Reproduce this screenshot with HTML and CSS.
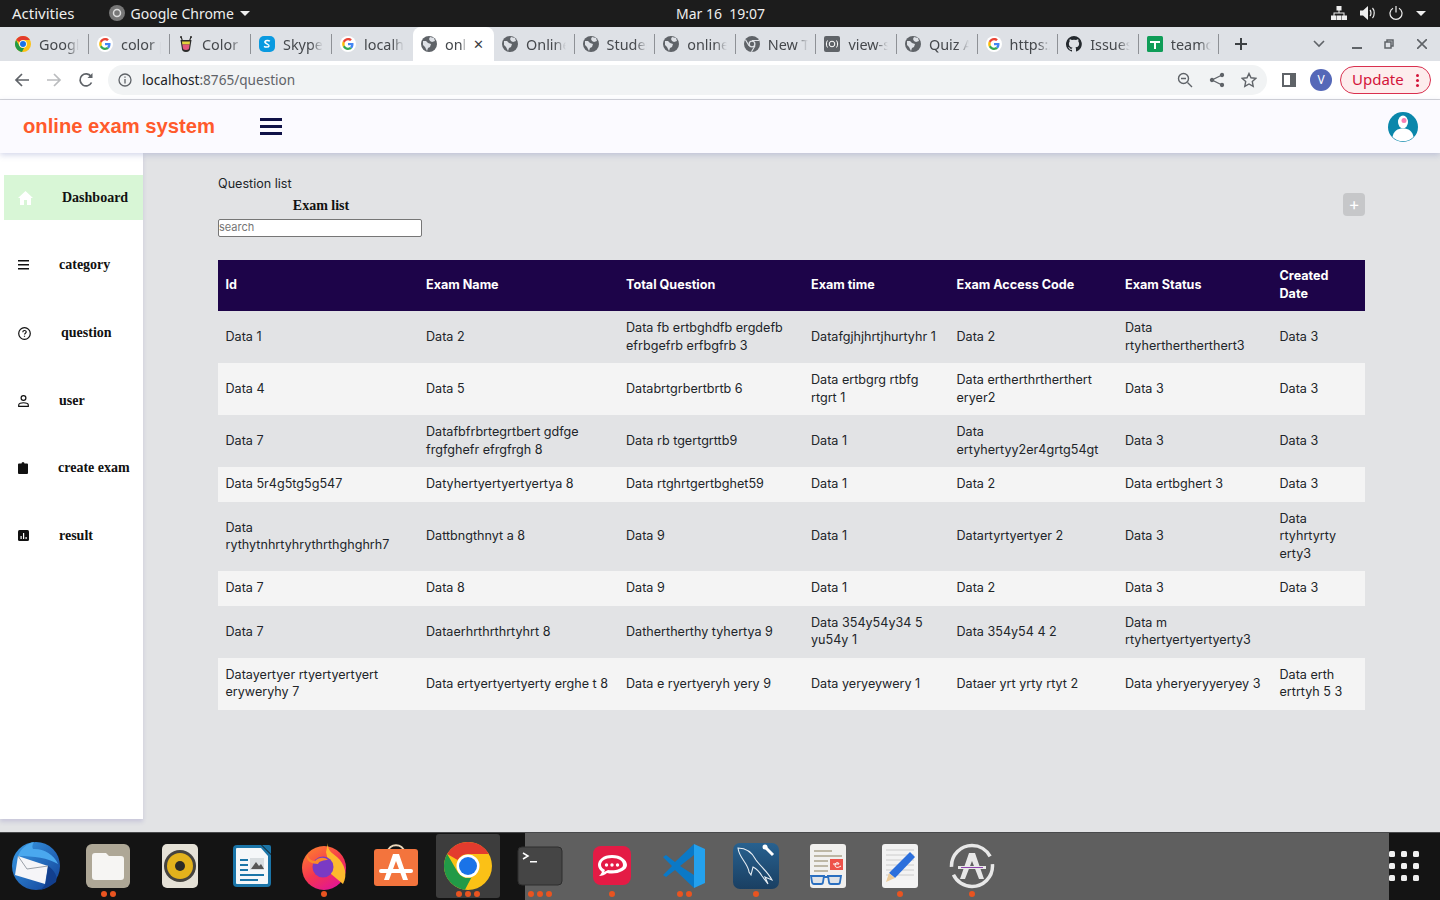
FILE: index.html
```html
<!DOCTYPE html>
<html lang="en">
<head>
    <meta charset="UTF-8">
    <title>online exam system</title>
    <link rel="stylesheet" href="styles.css">
</head>
<body>
    <svg class="defs" width="0" height="0">
        <defs>
            <linearGradient id="fox" x1="0" y1="0" x2="0.6" y2="1">
                <stop offset="0" stop-color="#ff8a2a"/>
                <stop offset="0.6" stop-color="#f5364f"/>
                <stop offset="1" stop-color="#e3188f"/>
            </linearGradient>
            <linearGradient id="bird" x1="0" y1="0" x2="1" y2="1">
                <stop offset="0" stop-color="#3a9ce6"/>
                <stop offset="1" stop-color="#113f96"/>
            </linearGradient>
            <linearGradient id="sql" x1="0" y1="0" x2="0" y2="1">
                <stop offset="0" stop-color="#28618f"/>
                <stop offset="1" stop-color="#1a3f62"/>
            </linearGradient>
        </defs>
        <symbol id="globe" viewBox="0 0 16 16">
            <circle cx="8" cy="8" r="8" fill="#5f6368"/>
            <path d="M2 5l3 0 2 2 3 1-1 3-2 1-1 3-2-4-2-2zM9 1l4 1 1 3-3 1-2-1-1-2z" fill="#dee1e6"/>
        </symbol>
        <symbol id="gicon" viewBox="0 0 16 16">
            <circle cx="8" cy="8" r="8" fill="#fff"/>
            <g transform="translate(8 8) scale(1.2) translate(-8 -8)">
                <path d="M12.600 8.200c0-.4 0-.7-.1-1H8v1.900h2.600c-.1.600-.5 1.100-1 1.500l1.600 1.200c.9-.9 1.400-2.100 1.400-3.600z" fill="#4285f4"/>
                <path d="M8 13c1.300 0 2.400-.4 3.200-1.200l-1.600-1.200c-.4.300-1 .5-1.600.5-1.300 0-2.300-.8-2.700-2L3.700 10.300C4.500 11.900 6.100 13 8 13z" fill="#34a853"/>
                <path d="M5.300 9.100c-.2-.7-.2-1.400 0-2.100L3.700 5.700c-.7 1.400-.7 3.200 0 4.600z" fill="#fbbc05"/>
                <path d="M8 4.900c.7 0 1.300.2 1.800.7l1.400-1.400C10.400 3.400 9.300 3 8 3 6.100 3 4.500 4.100 3.700 5.700L5.300 7c.4-1.200 1.400-2.100 2.700-2.100z" fill="#ea4335"/>
            </g>
        </symbol>
        <symbol id="chrome" viewBox="0 0 48 48">
            <circle cx="24" cy="24" r="24" fill="#fbc116"/>
            <path d="M24 0a24 24 0 0 1 20.800 12H24a12 12 0 0 0-10.400 6L3.200 12A24 24 0 0 1 24 0z" fill="#e33b2e"/>
            <path d="M3.200 12l10.400 18a12 12 0 0 0 13.800 5.500L21 47.800A24 24 0 0 1 3.200 12z" fill="#229a47"/>
            <circle cx="24" cy="24" r="11.500" fill="#fff"/>
            <circle cx="24" cy="24" r="9" fill="#1a73e8"/>
        </symbol>
    </svg>

    <div class="topbar">
        <span class="activities">Activities</span>
        <span class="app-menu">
            <svg class="chrome-mono" width="16" height="16" viewBox="0 0 16 16"><circle cx="8" cy="8" r="8" fill="#777"/><circle cx="8" cy="8" r="3.500" fill="none" stroke="#ddd" stroke-width="1.500"/></svg>
            Google Chrome
            <i class="caret"></i>
        </span>
        <span class="clock">Mar 16&nbsp; 19:07</span>
        <span class="tray">
            <svg width="16" height="14" viewBox="0 0 16 14" fill="#eee"><path d="M5.500 0h5v4.500h-5zM0 9.500h5V14H0zM5.500 9.500h5V14h-5zM11 9.500h5V14h-5zM7.500 4.500h1v2h5v3h-1v-2h-9v2h-1v-3h5z"/></svg>
            <svg width="16" height="14" viewBox="0 0 16 14" fill="#eee"><path d="M0 4.500h3L8 0v14l-5-4.500H0z"/><path d="M10 4c1.300 1.500 1.300 4.500 0 6M12.500 2c2.300 2.500 2.300 7.500 0 10" fill="none" stroke="#eee" stroke-width="1.200"/></svg>
            <svg width="14" height="14" viewBox="0 0 14 14" fill="none" stroke="#eee" stroke-width="1.200"><path d="M4 2.200a6 6 0 1 0 6 0M7 0v6.500"/></svg>
            <i class="caret"></i>
        </span>
    </div>

    <div class="tabstrip">
        <div class="tab"><svg class="fav" viewBox="0 0 48 48"><use href="#chrome"/></svg><span class="tab-title">Google</span></div>
        <div class="tab"><svg class="fav"><use href="#gicon"/></svg><span class="tab-title">color picker</span></div>
        <div class="tab"><svg class="fav" viewBox="0 0 16 16"><path d="M2.500 4h11l-1.300 8a4.200 4 0 0 1-8.400 0z" fill="#2b2b2b"/><path d="M4 5.500h8l-.3 3H4.300z" fill="#e3d23c"/><path d="M4.400 8.500h7.200l-.4 3a3.200 2.500 0 0 1-6.400 0z" fill="#e2587c"/><path d="M3 1l1.200 3M13 1l-1.200 3" stroke="#2b2b2b" stroke-width="1.200"/><circle cx="3" cy="1" r="1" fill="#2b2b2b"/><circle cx="13" cy="1" r="1" fill="#2b2b2b"/></svg><span class="tab-title">Color Hunt</span></div>
        <div class="tab"><svg class="fav" viewBox="0 0 16 16"><rect width="16" height="16" rx="5" fill="#0a9ae0"/><path d="M10.800 5.300C10 4.500 7 4 6 5.500c-1 2 4.500 2.500 4 4.500-.5 1.500-3.500 1.300-5 .3" fill="none" stroke="#fff" stroke-width="1.500"/></svg><span class="tab-title">Skype</span></div>
        <div class="tab"><svg class="fav"><use href="#gicon"/></svg><span class="tab-title">localhost</span></div>
        <div class="tab tab-active"><svg class="fav"><use href="#globe"/></svg><span class="tab-title">onl</span><span class="tab-close">✕</span></div>
        <div class="tab"><svg class="fav"><use href="#globe"/></svg><span class="tab-title">Online exam</span></div>
        <div class="tab"><svg class="fav"><use href="#globe"/></svg><span class="tab-title">Student</span></div>
        <div class="tab"><svg class="fav"><use href="#globe"/></svg><span class="tab-title">online exam</span></div>
        <div class="tab"><svg class="fav" viewBox="0 0 16 16"><circle cx="8" cy="8" r="8" fill="#5f6368"/><path d="M8 4.500h7M5 9.800L1.500 3.800M11 9.800l-3.500 6" stroke="#dee1e6" stroke-width="1.200"/><circle cx="8" cy="8" r="3.500" fill="#dee1e6"/><circle cx="8" cy="8" r="2.200" fill="#5f6368"/></svg><span class="tab-title">New Tab</span></div>
        <div class="tab"><svg class="fav" viewBox="0 0 16 16"><rect width="16" height="16" rx="2" fill="#5f6368"/><circle cx="8" cy="8" r="2.800" fill="none" stroke="#fff"/><path d="M3.500 4.500c-1.500 2-1.500 5 0 7M12.500 4.500c1.500 2 1.500 5 0 7" fill="none" stroke="#fff"/></svg><span class="tab-title">view-source</span></div>
        <div class="tab"><svg class="fav"><use href="#globe"/></svg><span class="tab-title">Quiz App</span></div>
        <div class="tab"><svg class="fav"><use href="#gicon"/></svg><span class="tab-title">https://www</span></div>
        <div class="tab"><svg class="fav" viewBox="0 0 16 16"><path fill="#24292e" d="M8 0a8 8 0 0 0-2.500 15.600c.4.100.5-.2.500-.4v-1.400c-2.200.5-2.700-1-2.700-1-.4-.9-.9-1.200-.9-1.200-.7-.5.100-.5.100-.5.800.1 1.200.8 1.200.8.700 1.200 1.900.9 2.300.7.100-.5.300-.9.500-1.100-1.800-.2-3.600-.9-3.600-4 0-.9.300-1.600.8-2.100-.1-.2-.4-1 .1-2.100 0 0 .7-.2 2.200.8a7.600 7.600 0 0 1 4 0c1.500-1 2.200-.8 2.200-.8.400 1.100.2 1.900.1 2.100.5.600.8 1.300.8 2.100 0 3.100-1.900 3.700-3.700 3.900.3.300.6.800.6 1.500v2.200c0 .2.100.5.600.4A8 8 0 0 0 8 0z"/></svg><span class="tab-title">Issues</span></div>
        <div class="tab"><svg class="fav" viewBox="0 0 16 16"><rect width="16" height="16" rx="1.500" fill="#0f9d58"/><path d="M3 5h10v2H9v6H7V7H3z" fill="#fff"/></svg><span class="tab-title">teamcode</span></div>
        <svg class="newtab" width="14" height="14" viewBox="0 0 14 14" stroke="#3c4043" stroke-width="2"><path d="M7 1v12M1 7h12"/></svg>
        <div class="win-controls">
            <svg width="12" height="8" viewBox="0 0 12 8" fill="none" stroke="#5f6368" stroke-width="1.600"><path d="M1 1l5 5 5-5"/></svg>
            <svg width="10" height="10" viewBox="0 0 10 10" fill="#5f6368"><path d="M0 8h10v2H0z"/></svg>
            <svg width="10" height="10" viewBox="0 0 10 10" fill="none" stroke="#5f6368" stroke-width="1.500"><path d="M3 3V1h6v6H7M1 3h6v6H1z"/></svg>
            <svg width="10" height="10" viewBox="0 0 10 10" fill="none" stroke="#5f6368" stroke-width="1.600"><path d="M0 0l10 10M10 0L0 10"/></svg>
        </div>
    </div>

    <div class="toolbar">
        <svg class="nav-icon" width="16" height="16" viewBox="0 0 16 16" fill="none" stroke="#5f6368" stroke-width="1.700"><path d="M15 8H2M8 2L2 8l6 6"/></svg>
        <svg class="nav-icon" width="16" height="16" viewBox="0 0 16 16" fill="none" stroke="#babcbe" stroke-width="1.700"><path d="M1 8h13M8 2l6 6-6 6"/></svg>
        <svg class="nav-icon" width="16" height="16" viewBox="0 0 16 16" fill="none" stroke="#5f6368" stroke-width="1.700"><path d="M13.500 10.500A6 6 0 1 1 13 4.500"/><path d="M14.500 1v5h-5z" fill="#5f6368" stroke="none"/></svg>
        <div class="omnibox">
            <svg width="14" height="14" viewBox="0 0 14 14" fill="none" stroke="#5f6368" stroke-width="1.300"><circle cx="7" cy="7" r="6"/><path d="M7 6v4.500M7 3.500v1.300"/></svg>
            <span class="url"><span class="url-host">localhost</span>:8765/question</span>
            <span class="omni-actions">
                <svg width="16" height="16" viewBox="0 0 16 16" fill="none" stroke="#5f6368" stroke-width="1.400"><circle cx="6.500" cy="6.500" r="5"/><path d="M10.500 10.500L15 15M4 6.500h5"/></svg>
                <svg width="16" height="16" viewBox="0 0 16 16" fill="#5f6368" stroke="#5f6368" stroke-width="1.300"><path d="M13 3L3 8l10 5" fill="none"/><circle cx="13" cy="3" r="1.500"/><circle cx="3" cy="8" r="1.500"/><circle cx="13" cy="13" r="1.500"/></svg>
                <svg width="16" height="16" viewBox="0 0 16 16" fill="none" stroke="#5f6368" stroke-width="1.400"><path d="M8 1.500l2 4.300 4.700.6-3.400 3.200.9 4.700L8 12l-4.200 2.300.9-4.700L1.300 6.400 6 5.800z"/></svg>
            </span>
        </div>
        <svg class="panel-icon" width="14" height="14" viewBox="0 0 14 14"><path d="M0 0h14v14H0z" fill="#5f6368"/><path d="M2 2h6v10H2z" fill="#fff"/></svg>
        <span class="profile">V</span>
        <span class="update">Update<i class="update-dots"></i></span>
    </div>

    <header class="app-header">
        <span class="brand">online exam system</span>
        <span class="burger"><i></i><i></i><i></i></span>
        <svg class="avatar" width="30" height="30" viewBox="0 0 30 30">
            <circle cx="15" cy="15" r="15" fill="#0a87ab"/>
            <ellipse cx="15" cy="10" rx="5" ry="6.500" fill="#fff"/>
            <circle cx="16" cy="8.500" r="2.500" fill="#f77fb5"/>
            <path d="M4.500 25c1-6 5-8.500 10.500-8.500S24.500 19 25.500 25a15 15 0 0 1-21 0z" fill="#fff"/>
        </svg>
    </header>

    <div class="app-body">
        <nav class="sidebar">
            <a class="side-item active">
                <svg class="side-icon" width="15" height="14" viewBox="0 0 15 14" fill="#fff"><path d="M7.500 0L15 7h-2v7H9V9H6v5H2V7H0z"/></svg>
                <span class="side-label">Dashboard</span>
            </a>
            <a class="side-item item-category">
                <svg class="side-icon" width="11" height="10" viewBox="0 0 11 10" fill="#111"><path d="M0 0h11v1.400H0zM0 4h11v1.400H0zM0 8h11v1.400H0z"/></svg>
                <span class="side-label">category</span>
            </a>
            <a class="side-item item-question">
                <svg class="side-icon" width="13" height="13" viewBox="0 0 13 13" fill="none" stroke="#111" stroke-width="1.200"><circle cx="6.500" cy="6.500" r="5.800"/><path d="M4.800 5.200c0-2.200 3.400-2.200 3.400-.2 0 1.200-1.700 1.200-1.700 2.600M6.500 8.800v1"/></svg>
                <span class="side-label">question</span>
            </a>
            <a class="side-item item-user">
                <svg class="side-icon" width="11" height="12" viewBox="0 0 11 12" fill="none" stroke="#111" stroke-width="1.200"><circle cx="5.500" cy="3" r="2.400"/><path d="M.7 11.400V10c0-3 9.600-3 9.600 0v1.400z"/></svg>
                <span class="side-label">user</span>
            </a>
            <a class="side-item item-create">
                <svg class="side-icon" width="10" height="12" viewBox="0 0 10 12"><path d="M1 1.500h2.500a1.500 1.500 0 0 1 3 0H9a1 1 0 0 1 1 1V11a1 1 0 0 1-1 1H1a1 1 0 0 1-1-1V2.500a1 1 0 0 1 1-1z" fill="#111"/></svg>
                <span class="side-label">create exam</span>
            </a>
            <a class="side-item item-result">
                <svg class="side-icon" width="11" height="11" viewBox="0 0 11 11"><rect width="11" height="11" rx="1.500" fill="#111"/><path d="M2.500 6h1.200v3H2.500zM5 3h1.200v6H5zM7.500 7h1.200v2H7.500z" fill="#fff"/></svg>
                <span class="side-label">result</span>
            </a>
        </nav>

        <main class="content">
            <div class="content-head">
                <div class="head-left">
                    <div class="crumb">Question list</div>
                    <h2 class="list-title">Exam list</h2>
                    <input class="search" type="text" placeholder="search">
                </div>
                <button class="add-btn">+</button>
            </div>

            <table class="exam-table">
                <thead>
                    <tr>
                        <th>Id</th>
                        <th>Exam Name</th>
                        <th>Total Question</th>
                        <th>Exam time</th>
                        <th>Exam Access Code</th>
                        <th>Exam Status</th>
                        <th>Created Date</th>
                    </tr>
                </thead>
                <tbody>
                    <tr>
                        <td>Data 1</td>
                        <td>Data 2</td>
                        <td>Data fb ertbghdfb ergdefb efrbgefrb erfbgfrb 3</td>
                        <td>Datafgjhjhrtjhurtyhr 1</td>
                        <td>Data 2</td>
                        <td>Data rtyherthertherthert3</td>
                        <td>Data 3</td>
                    </tr>
                    <tr>
                        <td>Data 4</td>
                        <td>Data 5</td>
                        <td>Databrtgrbertbrtb 6</td>
                        <td>Data ertbgrg rtbfg rtgrt 1</td>
                        <td>Data ertherthrtherthert eryer2</td>
                        <td>Data 3</td>
                        <td>Data 3</td>
                    </tr>
                    <tr>
                        <td>Data 7</td>
                        <td>Datafbfrbrtegrtbert gdfge frgfghefr efrgfrgh 8</td>
                        <td>Data rb tgertgrttb9</td>
                        <td>Data 1</td>
                        <td>Data ertyhertyy2er4grtg54gt</td>
                        <td>Data 3</td>
                        <td>Data 3</td>
                    </tr>
                    <tr>
                        <td>Data 5r4g5tg5g547</td>
                        <td>Datyhertyertyertyertya 8</td>
                        <td>Data rtghrtgertbghet59</td>
                        <td>Data 1</td>
                        <td>Data 2</td>
                        <td>Data ertbghert 3</td>
                        <td>Data 3</td>
                    </tr>
                    <tr>
                        <td>Data rythytnhrtyhrythrthghghrh7</td>
                        <td>Dattbngthnyt a 8</td>
                        <td>Data 9</td>
                        <td>Data 1</td>
                        <td>Datartyrtyertyer 2</td>
                        <td>Data 3</td>
                        <td>Data rtyhrtyrty erty3</td>
                    </tr>
                    <tr>
                        <td>Data 7</td>
                        <td>Data 8</td>
                        <td>Data 9</td>
                        <td>Data 1</td>
                        <td>Data 2</td>
                        <td>Data 3</td>
                        <td>Data 3</td>
                    </tr>
                    <tr>
                        <td>Data 7</td>
                        <td>Dataerhrthrthrtyhrt 8</td>
                        <td>Dathertherthy tyhertya 9</td>
                        <td>Data 354y54y34 5 yu54y 1</td>
                        <td>Data 354y54 4 2</td>
                        <td>Data m rtyhertyertyertyerty3</td>
                        <td></td>
                    </tr>
                    <tr>
                        <td>Datayertyer rtyertyertyert eryweryhy 7</td>
                        <td>Data ertyertyertyerty erghe t 8</td>
                        <td>Data e ryertyeryh yery 9</td>
                        <td>Data yeryeywery 1</td>
                        <td>Dataer yrt yrty rtyt 2</td>
                        <td>Data yheryeryyeryey 3</td>
                        <td>Data erth ertrtyh 5 3</td>
                    </tr>
                </tbody>
            </table>
        </main>
    </div>

    <footer class="dock">
        <div class="dock-app">
            <svg class="dock-icon" viewBox="0 0 48 48"><circle cx="24" cy="24" r="24" fill="url(#bird)"/><path d="M6 14C9 6 16 1 22 0c-2 3-2 5-1 7C30 6 42 12 46 22 36 16 22 14 6 14z" fill="#4aa8ee"/><path d="M6 14l30 10-3 18L3 33z" fill="#f5f5f8"/><path d="M6 14l9 13 21-3" fill="none" stroke="#9aa0a8"/><path d="M36 24c6 4 10 10 8 16-5 4-11 7-16 8 4-3 6-6 6-9z" fill="#123f8e"/></svg>
            <div class="dots"></div>
        </div>
        <div class="dock-app">
            <svg class="dock-icon" viewBox="0 0 48 48"><rect x="2" y="2" width="44" height="44" rx="6" fill="#aea796"/><path d="M8 14a3 3 0 0 1 3-3h11l3 3h12a3 3 0 0 1 3 3v18a3 3 0 0 1-3 3H11a3 3 0 0 1-3-3z" fill="#f6f5f3"/></svg>
            <div class="dots"><i></i><i></i></div>
        </div>
        <div class="dock-app">
            <svg class="dock-icon" viewBox="0 0 48 48"><rect x="6" y="2" width="36" height="44" rx="5" fill="#e5e1d6"/><circle cx="24" cy="24" r="16" fill="#45433f"/><circle cx="24" cy="24" r="13" fill="#e3b21c"/><circle cx="24" cy="24" r="5" fill="#2b2a27"/></svg>
            <div class="dots"></div>
        </div>
        <div class="dock-app">
            <svg class="dock-icon" viewBox="0 0 48 48"><path d="M9 3h24l10 10v28a4 4 0 0 1-4 4H9a4 4 0 0 1-4-4V7a4 4 0 0 1 4-4z" fill="#1b75a8"/><path d="M9 6h24l7 8v27a1 1 0 0 1-1 1H9a1 1 0 0 1-1-1V7a1 1 0 0 1 1-1z" fill="#f5f7f9"/><path d="M34 3h7a2 2 0 0 1 2 2v7z" fill="#1b75a8"/><path d="M12 17h8v2h-8zM12 22h8v2h-8zM12 27h8v2h-8zM12 32h24v2H12zM12 37h18v2H12z" fill="#1b75a8"/><path d="M22 16h14v12H22z" fill="#d8dde0"/><path d="M23 27l5-7 3 4 2-2 3 5z" fill="#555"/></svg>
            <div class="dots"></div>
        </div>
        <div class="dock-app">
            <svg class="dock-icon" viewBox="0 0 48 48"><circle cx="24" cy="26" r="22" fill="url(#fox)"/><path d="M28 1c-1 7 4 10 9 14 8 7 11 18 6 27L31 32 26 10z" fill="#fdb92e"/><circle cx="23" cy="25" r="10.500" fill="#7a3ac4"/><path d="M7 12c1 4 4 7 8 7 4-4 10-4 13-1-4 0-9 1-10 4-6 0-13-3-11-10z" fill="#fb8a2c"/></svg>
            <div class="dots"><i></i></div>
        </div>
        <div class="dock-app">
            <svg class="dock-icon" viewBox="0 0 48 48"><path d="M16 10c0-9 16-9 16 0" fill="none" stroke="#ecd9bd" stroke-width="2"/><rect x="2" y="7" width="44" height="37" rx="3" fill="#f3743d"/><path d="M21 12h6l9 26h-5l-7-19-7 19h-5z" fill="#fff"/><path d="M9 27h30a2 2 0 0 1 0 4H9a2 2 0 0 1 0-4z" fill="#fff"/></svg>
            <div class="dots"></div>
        </div>
        <div class="dock-app dock-active">
            <svg class="dock-icon" viewBox="0 0 48 48"><use href="#chrome"/></svg>
            <div class="dots"><i></i><i></i><i></i></div>
        </div>
        <div class="dock-app">
            <svg class="dock-icon" viewBox="0 0 48 48"><rect x="2" y="5" width="44" height="38" rx="4" fill="#454545" stroke="#2e2e2e"/><path d="M7 11l5 3-5 3" fill="none" stroke="#fff" stroke-width="1.500"/><path d="M14 19h7v1.500h-7z" fill="#fff"/></svg>
            <div class="dots"><i></i><i></i><i></i></div>
        </div>
        <div class="dock-app">
            <svg class="dock-icon" viewBox="0 0 48 48"><rect x="5" y="4" width="38" height="39" rx="8" fill="#e41b45"/><path d="M24 13c-9 0-14 5-14 10 0 3 2 5 4 7-1 2-2 3-3 4 3 0 6-1 8-3 9 2 20-2 20-8 0-5-6-10-15-10z" fill="#fff"/><path d="M24 16c-7 0-11 3-11 7 0 2 2 4 4 5l-1 2 4-2c7 1 15-1 15-5s-4-7-11-7z" fill="#e41b45"/><circle cx="18.500" cy="23" r="1.700" fill="#fff"/><circle cx="24" cy="23" r="1.700" fill="#fff"/><circle cx="29.500" cy="23" r="1.700" fill="#fff"/></svg>
            <div class="dots"><i></i></div>
        </div>
        <div class="dock-app">
            <svg class="dock-icon" viewBox="0 0 48 48"><path d="M34 2l11 5v34l-11 5z" fill="#23a1ee"/><path d="M34 2L15 20 6 13l-3 2 9 9-9 9 3 2 9-7 19 18V33L20 24 34 13z" fill="#0a79c7"/></svg>
            <div class="dots"><i></i><i></i></div>
        </div>
        <div class="dock-app">
            <svg class="dock-icon" viewBox="0 0 48 48"><rect x="1" y="1" width="46" height="46" rx="7" fill="url(#sql)"/><path d="M6 6c8 0 14 4 18 12 4 6 12 12 16 20l-7-3 3 7-6-8c-3-5-7-8-9-9l-2 8-2-3c-1-9-10-14-11-24z" fill="none" stroke="#e6edf3" stroke-width="1.100"/><path d="M33 5l8 8" stroke="#fff" stroke-width="3"/><circle cx="33" cy="5" r="2.500" fill="#fff"/></svg>
            <div class="dots"><i></i></div>
        </div>
        <div class="dock-app">
            <svg class="dock-icon" viewBox="0 0 48 48"><rect x="6" y="2" width="36" height="44" rx="3" fill="#f1f0ee"/><path d="M10 8h18v2H10zM10 13h28v2H10zM10 18h14v2H10zM10 23h14v2H10zM10 28h14v2H10z" fill="#bdb7a5"/><rect x="26" y="17" width="13" height="11" fill="#ee524a"/><path d="M29 22h6c0-2-4-2-4 1s3 3 6 1" fill="none" stroke="#fff"/><path d="M7 34h13l-1 6a2 2 0 0 1-2 2h-7a2 2 0 0 1-2-2zM24 34h13l-1 6a2 2 0 0 1-2 2h-7a2 2 0 0 1-2-2zM20 35h4" fill="#dfe3e8" stroke="#2a6fc0" stroke-width="1.800"/></svg>
            <div class="dots"></div>
        </div>
        <div class="dock-app">
            <svg class="dock-icon" viewBox="0 0 48 48"><rect x="6" y="2" width="36" height="44" rx="3" fill="#f3f3f3"/><path d="M10 8h28M10 13h28M10 18h28M10 23h28M10 28h28M10 33h28" stroke="#ccc"/><path d="M34 10l5 5-20 21-6-5z" fill="#2c6fdc"/><path d="M13 31l6 5-9 4z" fill="#eccb9a"/></svg>
            <div class="dots"><i></i></div>
        </div>
        <div class="dock-app">
            <svg class="dock-icon" viewBox="0 0 48 48"><circle cx="24" cy="24" r="20.500" fill="none" stroke="#e8e8e8" stroke-width="3.500" stroke-dasharray="55 8"/><path d="M21 11h6l9 26h-5l-7-18-7 18h-5z" fill="#e8e8e8"/><path d="M10 24h28v3H10z" fill="#e8e8e8"/><path d="M13 25.500h22" stroke="#8e44ad"/></svg>
            <div class="dots"><i></i></div>
        </div>
        <div class="app-grid"><i></i><i></i><i></i><i></i><i></i><i></i><i></i><i></i><i></i></div>
    </footer>
</body>
</html>
```

FILE: styles.css
```css
* {
    box-sizing: border-box;
}
html, body {
    height: 100%;
}
body {
    margin: 0;
    width: 1440px;
    height: 900px;
    overflow: hidden;
    display: flex;
    flex-direction: column;
    font-family: "Noto Sans", sans-serif;
    background-color: #e2e3e5;
}
.defs {
    position: absolute;
}

/* desktop top bar */
.topbar {
    height: 27px;
    flex: none;
    display: flex;
    align-items: center;
    padding-bottom: 1px;
    background-color: #1c1c1c;
    color: #eee;
    font-size: 14px;
    position: relative;
}
.activities {
    margin-left: 12px;
    font-size: 15px;
}
.app-menu {
    display: flex;
    align-items: center;
    gap: 6px;
    margin-left: 34px;
}
.caret {
    width: 0;
    height: 0;
    border-left: 5px solid transparent;
    border-right: 5px solid transparent;
    border-top: 5px solid #eee;
}
.clock {
    position: absolute;
    left: 676px;
}
.tray {
    margin-left: auto;
    margin-right: 14px;
    display: flex;
    align-items: center;
    gap: 13px;
}

/* chrome tabs */
.tabstrip {
    height: 34px;
    flex: none;
    display: flex;
    align-items: center;
    padding-left: 8px;
    background-color: #dee1e6;
    position: relative;
    font-size: 14.4px;
    color: #45484c;
}
.tab {
    width: 81px;
    height: 34px;
    flex: none;
    display: flex;
    align-items: center;
    padding-left: 8px;
    position: relative;
}
.tab:first-child {
    padding-left: 7px;
}
.tab:nth-child(n+7) {
    width: 80.6px;
}
.tab::after {
    content: "";
    position: absolute;
    right: 0;
    top: 7px;
    height: 20px;
    width: 1px;
    background-color: #8e9196;
}
.tab:nth-child(5)::after, .tab-active::after {
    display: none;
}
.tab-active {
    background-color: #fff;
    border-radius: 8px 8px 0 0;
}
.fav {
    width: 16px;
    height: 16px;
    flex: none;
}
.tab-title {
    margin-left: 8px;
    width: 40px;
    overflow: hidden;
    white-space: nowrap;
    -webkit-mask-image: linear-gradient(90deg, #000 70%, transparent 100%);
    mask-image: linear-gradient(90deg, #000 70%, transparent 100%);
}
.tab-active .tab-title {
    width: 22px;
}
.tab-close {
    margin-left: 6px;
    font-size: 13px;
    color: #3c4043;
}
.newtab {
    margin-left: 15px;
}
.win-controls {
    position: absolute;
    right: 14px;
    top: 0;
    height: 34px;
    display: flex;
    align-items: center;
    gap: 22px;
}
.win-controls svg:first-child {
    margin-right: 5px;
}
.win-controls svg:last-child {
    margin-left: 1px;
    margin-right: -1px;
}

/* address bar */
.toolbar {
    height: 39px;
    flex: none;
    display: flex;
    align-items: center;
    padding: 0 9px 1px 14px;
    background-color: #fff;
    border-bottom: 1px solid #d3d4d7;
}
.nav-icon {
    margin-right: 16px;
}
.omnibox {
    width: 1159px;
    height: 30px;
    margin-left: -2px;
    display: flex;
    align-items: center;
    padding: 0 10px;
    border-radius: 15px;
    background-color: #f1f3f4;
    font-size: 13.6px;
    color: #5f6368;
}
.url {
    margin-left: 10px;
}
.url-host {
    color: #202124;
}
.omni-actions {
    margin-left: auto;
    display: flex;
    gap: 16px;
}
.panel-icon {
    margin-left: 15px;
}
.profile {
    width: 22px;
    height: 22px;
    margin-left: 14px;
    border-radius: 50%;
    background-color: #5568b8;
    color: #fff;
    font-size: 12px;
    text-align: center;
    line-height: 22px;
}
.update {
    width: 91px;
    height: 28px;
    margin-left: 8px;
    display: flex;
    align-items: center;
    padding: 0 0 2px 11px;
    position: relative;
    border: 1px solid #d9304f;
    border-radius: 14px;
    background-color: #fdeded;
    color: #d3143a;
    font-size: 15px;
}
.update-dots {
    position: absolute;
    right: 11px;
    top: 7px;
    width: 3px;
    height: 3px;
    border-radius: 50%;
    background-color: #d3143a;
    box-shadow: 0 5px 0 #d3143a, 0 10px 0 #d3143a;
}

/* app header */
.app-header {
    height: 53px;
    flex: none;
    display: flex;
    align-items: center;
    padding: 0 22px 0 23px;
    background-color: #fbfaff;
    box-shadow: 0 2px 6px rgba(80, 90, 170, 0.25);
    position: relative;
}
.brand {
    width: 237px;
    font-family: "Liberation Sans", sans-serif;
    font-weight: bold;
    font-size: 20.2px;
    color: #ff5a2c;
}
.burger {
    display: flex;
    flex-direction: column;
    gap: 4px;
}
.burger i {
    width: 22px;
    height: 3px;
    background-color: #0f1147;
}
.avatar {
    margin-left: auto;
}

/* page */
.app-body {
    flex: 1;
    min-height: 0;
    display: flex;
}
.sidebar {
    width: 143px;
    flex: none;
    margin-bottom: 13px;
    padding: 22.4px 0 0 4px;
    background-color: #fff;
    box-shadow: 0 3px 4px rgba(90, 80, 170, 0.18);
    font-family: "Liberation Serif", serif;
    font-weight: bold;
    font-size: 14px;
    color: #111;
}
.side-item {
    height: 45px;
    margin-bottom: 22.6px;
    display: flex;
    align-items: center;
    padding-left: 14px;
    position: relative;
}
.side-item.active {
    background-color: #d8f6d6;
}
.side-icon {
    flex: none;
}
.side-label {
    position: absolute;
    left: 58px;
}
.item-category .side-label, .item-user .side-label, .item-result .side-label {
    left: 55px;
}
.item-question .side-label {
    left: 57px;
}
.item-create .side-label {
    left: 54px;
}
.content {
    flex: 1;
    padding: 22px 75px 0;
    font-family: Inter, sans-serif;
    font-size: 12.6px;
    color: #212529;
}
.content-head {
    display: flex;
    justify-content: space-between;
    align-items: flex-start;
}
.head-left {
    width: 204px;
}
.crumb {
    line-height: 18px;
}
.list-title {
    margin: 4px 0 4px;
    padding-left: 2px;
    font-family: "Liberation Serif", serif;
    font-size: 14px;
    line-height: 18px;
    text-align: center;
    color: #111;
}
.search {
    display: block;
    width: 204px;
    height: 18px;
    padding: 0 1px 2px 0;
    border: 1px solid #767676;
    border-radius: 2px;
    background-color: #fff;
    font-family: Inter, sans-serif;
    font-size: 11px;
}
.add-btn {
    width: 22px;
    height: 23px;
    margin-top: 18px;
    padding: 0;
    border: none;
    border-radius: 4px;
    background-color: #c6c7c9;
    color: #fff;
    font-family: Inter, sans-serif;
    font-size: 17px;
    line-height: 23px;
}

/* table */
.exam-table {
    width: 1147px;
    margin-top: 23px;
    table-layout: fixed;
    border-collapse: collapse;
    line-height: 17.33px;
}
.exam-table th {
    height: 51px;
    padding: 0 7.5px 2px;
    text-align: left;
    font-weight: 700;
    line-height: 18px;
    background-color: #1d0449;
    color: #fff;
}
.exam-table td {
    padding: 8.4px 7.5px 8.94px;
}
.exam-table tbody tr:nth-child(even) {
    background-color: #f4f4f4;
}
.exam-table th:nth-child(1) { width: 200.5px; }
.exam-table th:nth-child(2) { width: 200px; }
.exam-table th:nth-child(3) { width: 185px; }
.exam-table th:nth-child(4) { width: 145.5px; }
.exam-table th:nth-child(5) { width: 168.5px; }
.exam-table th:nth-child(6) { width: 154.5px; }
.exam-table th:nth-child(7) { width: 93px; }

/* dock */
.dock {
    height: 68px;
    flex: none;
    display: flex;
    position: relative;
    background: linear-gradient(90deg, #141414 525px, #5f5f5f 525px, #5f5f5f 1389px, #141414 1389px);
    border-top: 1px solid #48494b;
}
.dock-app {
    width: 72px;
    height: 67px;
    flex: none;
    display: flex;
    flex-direction: column;
    align-items: center;
    padding-top: 9px;
}
.dock-active {
    width: 64px;
    height: 64px;
    margin: 1px 4px 0;
    padding-top: 8px;
    border-radius: 3px;
    background-color: #3d3d3d;
}
.dock-icon {
    width: 48px;
    height: 48px;
}
.dots {
    display: flex;
    gap: 3px;
    margin-top: 1px;
}
.dots i {
    width: 6px;
    height: 6px;
    border-radius: 50%;
    background-color: #e95420;
}
.app-grid {
    position: absolute;
    left: 1389px;
    top: 18px;
    display: grid;
    grid-template-columns: repeat(3, 6px);
    gap: 6px;
}
.app-grid i {
    width: 6px;
    height: 6px;
    border-radius: 1.5px;
    background-color: #eee;
}
```
